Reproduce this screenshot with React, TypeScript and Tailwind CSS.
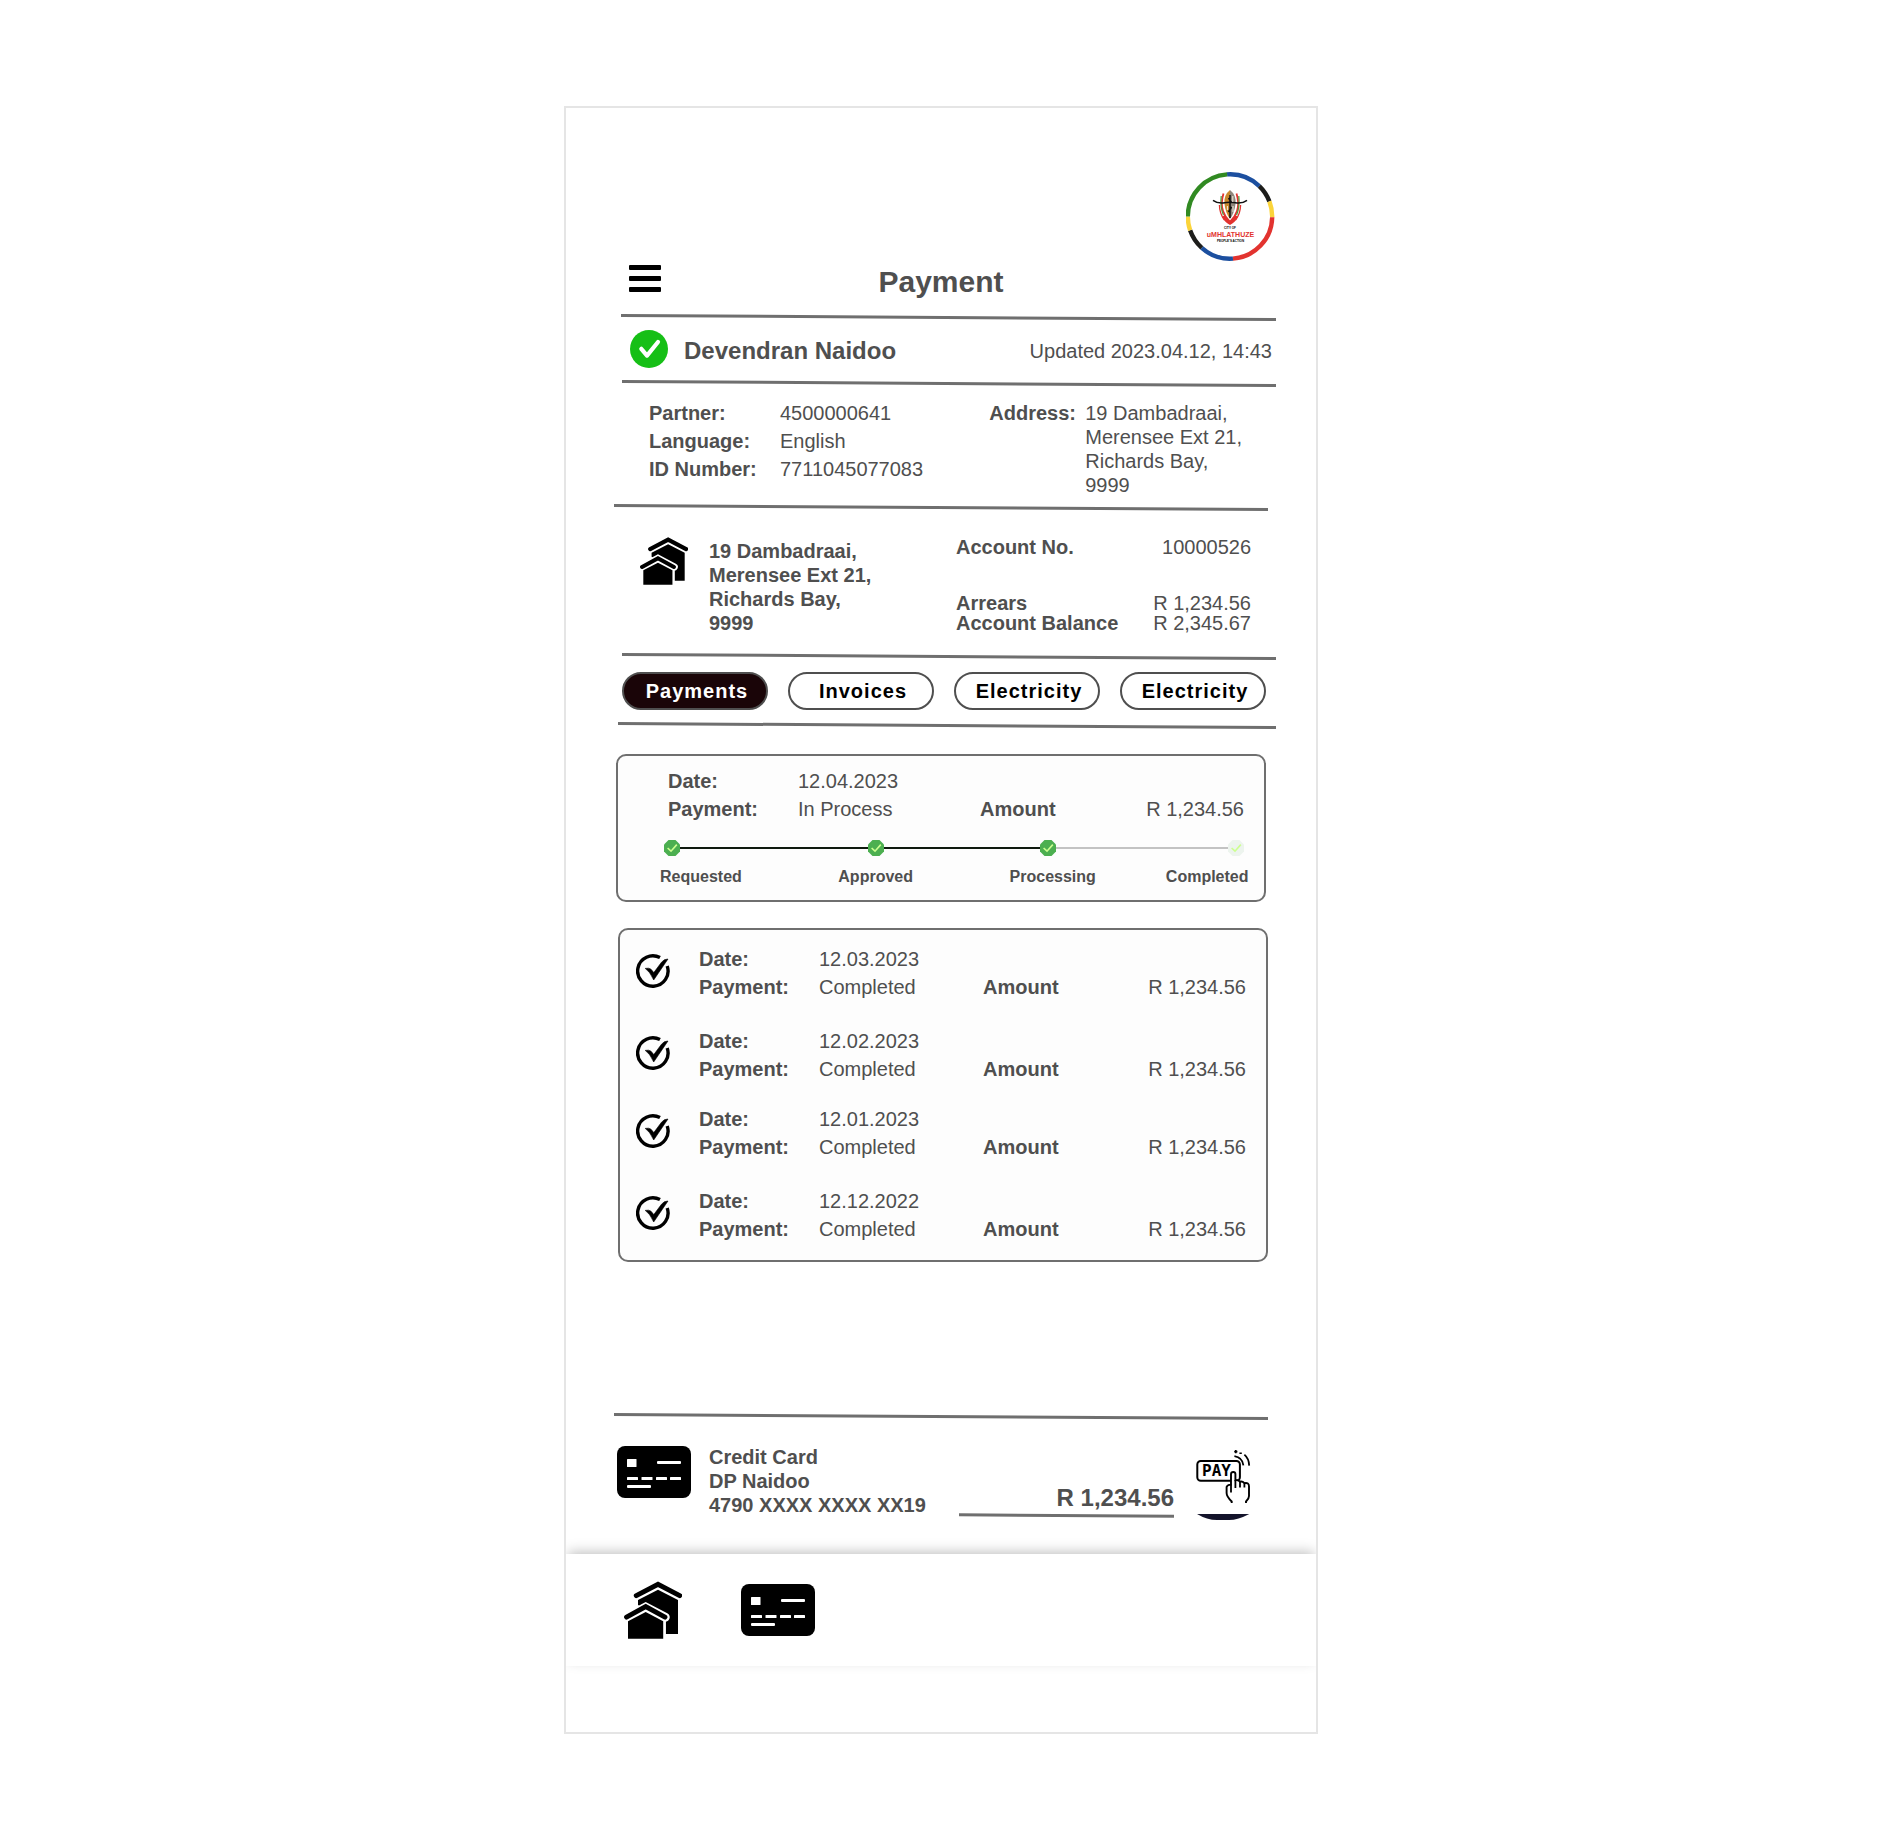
import React from "react";

function Divider({ className = "" }: { className?: string }) {
  return <hr className={`h-[3px] rotate-[0.35deg] border-0 bg-[#6f6f6f] ${className}`} />;
}

function HousesIcon({ className = "" }: { className?: string }) {
  return (
    <svg viewBox="0 0 58 58" className={className} aria-hidden="true">
      <polyline points="12.3,14.6 34,3.2 55.7,14.6" fill="none" stroke="#000" strokeWidth="5" strokeLinecap="round" />
      <polygon points="14,19 34,8.7 54,19 54,53 41.7,53 41.7,40 14,24" />
      <polyline points="2.5,36.2 21.7,26 41.2,36.2" fill="none" stroke="#fff" strokeWidth="9" strokeLinecap="round" />
      <rect x="38" y="40" width="3.8" height="17.7" fill="#fff" />
      <polyline points="2.5,36.2 21.7,25.6 41,36.2" fill="none" stroke="#000" strokeWidth="4.8" strokeLinecap="round" />
      <polygon points="4,40.3 21.7,31 39.2,40.3 39.2,57.7 4,57.7" />
    </svg>
  );
}

function CardIcon({ className = "" }: { className?: string }) {
  return (
    <svg viewBox="0 0 74 52" className={className} aria-hidden="true">
      <rect width="74" height="52" rx="8" />
      <g fill="#fff">
        <rect x="10" y="13" width="9.5" height="8" rx="0.5" />
        <rect x="40" y="15" width="24" height="3" rx="1" />
        <rect x="10" y="31" width="11" height="3" rx="0.5" />
        <rect x="24.5" y="31" width="11" height="3" rx="0.5" />
        <rect x="39" y="31" width="11" height="3" rx="0.5" />
        <rect x="53" y="31" width="11" height="3" rx="0.5" />
        <rect x="10" y="39" width="24" height="3" rx="1" />
      </g>
    </svg>
  );
}

function DoneIcon() {
  return (
    <svg viewBox="0 0 34 34" className="mt-[9px] size-[34px]" aria-hidden="true">
      <path d="M24 3.6A15.2 15.2 0 1 0 31.2 12" fill="none" stroke="#000" strokeWidth="3.4" />
      <path d="M9.2 14.4Q13 13.6 15 15.2L17.8 18.6L25.5 8.2Q28.2 4.8 32 5L17.7 26Q14 17.5 9.2 14.4Z" stroke="#000" strokeWidth="0.6" />
    </svg>
  );
}

function VerifiedIcon() {
  return (
    <svg viewBox="0 0 38 38" className="size-[38px]" aria-hidden="true">
      <circle cx="19" cy="19" r="19" fill="#16bf16" />
      <polyline points="11.3,18.8 17,25.6 28,12" fill="none" stroke="#fff" strokeWidth="4.2" strokeLinecap="round" strokeLinejoin="round" />
    </svg>
  );
}

function StepMarker({ done }: { done: boolean }) {
  return (
    <svg viewBox="0 0 16 16" className="size-4 shrink-0" aria-hidden="true">
      <polygon points="4.5,0 11.5,0 16,4.5 16,11.5 11.5,16 4.5,16 0,11.5 0,4.5" fill={done ? "#4caf50" : "#edf4ee"} />
      <polyline points="3.6,8 7,11.2 12.8,4.6" fill="none" stroke="#ccff90" strokeWidth="1.6" />
    </svg>
  );
}

function PayIcon() {
  return (
    <svg viewBox="0 0 56 70" className="h-[70px] w-14" aria-hidden="true">
      <rect x="1.3" y="11" width="42.6" height="19.8" rx="3.5" fill="#fff" stroke="#000" strokeWidth="2" />
      <text x="6" y="26" fontSize="16" fontWeight="700" fontFamily="DejaVu Sans Mono, monospace">PAY</text>
      <path
        d="M35.7 53V51.5Q30.6 46.5 30.6 43V37Q31 34.8 35 34.6V24Q35.2 22 37.2 22Q39.4 22 39.4 24V30Q41.5 29.6 44 31.6Q46.5 31 48.4 33.2Q53 32.2 53 36.5V46Q53 49 50 51.5V53"
        fill="#fff"
        stroke="#000"
        strokeWidth="1.9"
      />
      <path d="M35 34.6V42.6M39.4 30V38M44 31.6V37.6M48.4 33.2V37.6" fill="none" stroke="#000" strokeWidth="1.8" />
      <path d="M38.4 6.2Q46.5 7.5 47.4 15.4M48.4 4.6Q53 8.6 53.2 15.6" fill="none" stroke="#000" strokeWidth="1.8" />
      <path d="M38.2 1.6H41.4M39.8 0V3.2M43.4 3.2H45.8" fill="none" stroke="#000" strokeWidth="1.6" />
      <path d="M1 64H53.3Q42 70 33 70H21Q11 70 1 64Z" fill="#14142b" />
    </svg>
  );
}

const ring = [
  { from: -94, to: -46, color: "#1c4f9f" },
  { from: -46, to: -21, color: "#1d1d1b" },
  { from: -21, to: 1, color: "#fbd43a" },
  { from: 1, to: 86, color: "#e2332f" },
  { from: 86, to: 132, color: "#1c4f9f" },
  { from: 132, to: 161, color: "#1d1d1b" },
  { from: 161, to: 180, color: "#fbd43a" },
  { from: 180, to: 266, color: "#318a22" },
];

function CityLogo() {
  return (
    <svg viewBox="0 0 90 90" className="size-[90px]" role="img" aria-label="City of uMhlathuze">
      {ring.map((s) => (
        <circle
          key={s.from}
          cx="44"
          cy="44.5"
          r="42.2"
          fill="none"
          stroke={s.color}
          strokeWidth="4.4"
          pathLength={360}
          strokeDasharray={`${s.to - s.from} 360`}
          transform={`rotate(${s.from} 44 44.5)`}
        />
      ))}
      <path d="M38.5 43L44 49L49.5 43L52 45Q49 50.5 44 53Q39 50.5 36 45Z" fill="#e2332f" />
      <path d="M37.5 21.5Q34.5 31 37 39Q39 45 44 50Q49 45 51 39Q53.5 31 50.5 21.5" fill="none" stroke="#e2332f" strokeWidth="1.8" />
      <path d="M33.4 33Q33.6 42 38.5 48M54.6 33Q54.4 42 49.5 48" fill="none" stroke="#e2332f" strokeWidth="1.3" />
      <path d="M35.2 24Q34 35 37.4 43M52.8 24Q54 35 50.6 43" fill="none" stroke="#4f9a3c" strokeWidth="1.2" />
      <path d="M44 18Q37.5 23 38.5 32Q39.5 41 44 47Z" fill="#c9892c" />
      <path d="M44 18Q50.5 23 49.5 32Q48.5 41 44 47Z" fill="#8f867b" />
      <path d="M27 28.4Q31 31.4 37 31Q44 29.4 51 31Q57 31.4 61 28.4" fill="none" stroke="#111" strokeWidth="1.5" />
      <path d="M44 23V46M42.6 26L45.6 31M45.6 35L42.4 40" stroke="#111" strokeWidth="1.5" />
      <path d="M46.8 24V30M47 34V40M41.4 34V38" stroke="#f4efe2" strokeWidth="1" />
      <text x="44" y="57" textAnchor="middle" fontSize="3" fontWeight="700" fontFamily="Liberation Sans, sans-serif">CITY OF</text>
      <text x="44.5" y="65" textAnchor="middle" fontSize="7" fontWeight="700" fill="#e2332f" fontFamily="Liberation Sans, sans-serif">uMHLATHUZE</text>
      <text x="44.5" y="70" textAnchor="middle" fontSize="3" fontWeight="700" fontFamily="Liberation Sans, sans-serif">PEOPLE’S ACTION</text>
    </svg>
  );
}

const tabs = ["Payments", "Invoices", "Electricity", "Electricity"];

const history = [
  ["12.03.2023", "12.02.2023"],
  ["12.01.2023", "12.12.2022"],
];

function HistoryRow({ date }: { date: string }) {
  return (
    <li className="flex items-start pr-5 pl-4">
      <DoneIcon />
      <dl className="ml-[29px] grid flex-1 grid-cols-[120px_164px_1fr_auto] leading-7">
        <dt className="font-bold">Date:</dt>
        <dd className="col-span-3">{date}</dd>
        <dt className="font-bold">Payment:</dt>
        <dd>Completed</dd>
        <dt className="font-bold">Amount</dt>
        <dd>R 1,234.56</dd>
      </dl>
    </li>
  );
}

export default function App() {
  return (
    <div className="flex min-h-screen items-start justify-center bg-white py-[106px] pr-1 font-['Liberation_Sans',Arial,sans-serif] text-[20px] text-[#4f4f4f]">
      <main className="w-full max-w-[754px] overflow-hidden border-2 border-[#e5e5e5] bg-white pt-16 pb-[66px]">
        <header>
          <div className="flex justify-end pr-10">
            <CityLogo />
          </div>
          <div className="mt-0.5 grid grid-cols-[1fr_auto_1fr] items-start">
            <button type="button" aria-label="Open menu" className="mt-px ml-[63px] flex w-8 flex-col gap-[6px]">
              <span className="h-[5px] w-full rounded-[1px] bg-black" />
              <span className="h-[5px] w-full rounded-[1px] bg-black" />
              <span className="h-[5px] w-full rounded-[1px] bg-black" />
            </button>
            <h1 className="text-[30px] leading-9 font-bold">Payment</h1>
          </div>
        </header>

        <Divider className="mt-4 mr-10 ml-[55px]" />
        <section className="flex h-[63px] items-center pr-11 pb-[3px] pl-16">
          <VerifiedIcon />
          <h2 className="ml-4 pt-1 text-[24px] leading-7 font-bold">Devendran Naidoo</h2>
          <p className="ml-auto pt-1 leading-6">Updated 2023.04.12, 14:43</p>
        </section>

        <Divider className="mr-10 ml-14" />
        <section className="flex justify-between pt-[14px] pr-[74px] pb-[9px] pl-[83px]">
          <dl className="grid grid-cols-[131px_auto] content-start leading-7">
            <dt className="font-bold">Partner:</dt>
            <dd>4500000641</dd>
            <dt className="font-bold">Language:</dt>
            <dd>English</dd>
            <dt className="font-bold">ID Number:</dt>
            <dd>7711045077083</dd>
          </dl>
          <dl className="grid grid-cols-[96px_auto] pt-0.5 leading-6">
            <dt className="font-bold">Address:</dt>
            <dd>
              19 Dambadraai,
              <br />
              Merensee Ext 21,
              <br />
              Richards Bay,
              <br />
              9999
            </dd>
          </dl>
        </section>

        <Divider className="mr-12 ml-12" />
        <section className="flex items-start pt-7 pr-[65px] pb-5 pl-[74px]">
          <HousesIcon className="size-12" />
          <address className="ml-[21px] pt-0.5 leading-6 font-bold not-italic">
            19 Dambadraai,
            <br />
            Merensee Ext 21,
            <br />
            Richards Bay,
            <br />
            9999
          </address>
          <dl className="ml-auto grid w-[295px] grid-cols-[auto_auto] justify-between leading-5">
            <dt className="pb-9 font-bold">Account No.</dt>
            <dd className="text-right">10000526</dd>
            <dt className="font-bold">Arrears</dt>
            <dd className="text-right">R 1,234.56</dd>
            <dt className="font-bold">Account Balance</dt>
            <dd className="text-right">R 2,345.67</dd>
          </dl>
        </section>

        <Divider className="mr-10 ml-14" />
        <div role="tablist" className="grid grid-cols-4 gap-5 pt-[14px] pr-[50px] pb-[14px] pl-14">
          {tabs.map((label, i) => (
            <button
              key={i}
              type="button"
              role="tab"
              aria-selected={i === 0}
              className={`h-[38px] rounded-full border-2 border-[#4f4f4f] pl-1 leading-5 font-bold tracking-wider ${
                i === 0 ? "bg-[#1a0508] text-white" : "bg-white text-black"
              }`}
            >
              {label}
            </button>
          ))}
        </div>
        <Divider className="mr-10 ml-[52px]" />

        <section className="mt-[27px] mr-[50px] ml-[50px] rounded-[10px] border-2 border-[#6f6f6f] bg-[#fdfdfd] pt-[11px] pb-[11px]">
          <dl className="grid grid-cols-[130px_182px_1fr_auto] pr-5 pl-[50px] leading-7">
            <dt className="font-bold">Date:</dt>
            <dd className="col-span-3">12.04.2023</dd>
            <dt className="font-bold">Payment:</dt>
            <dd>In Process</dd>
            <dt className="font-bold">Amount</dt>
            <dd>R 1,234.56</dd>
          </dl>
          <div className="mt-[17px] flex items-center pr-5 pl-[46px]">
            <StepMarker done />
            <span className="h-0.5 grow-[188] bg-[#0f1a0f]" />
            <StepMarker done />
            <span className="h-0.5 grow-[156] bg-[#0f1a0f]" />
            <StepMarker done />
            <span className="h-0.5 grow-[172] bg-[#c3c3c3]" />
            <StepMarker done={false} />
          </div>
          <ol className="mt-[9px] grid grid-cols-[178fr_171fr_156fr_84fr] pr-[14px] pl-[42px] text-[16px] leading-6 font-bold">
            <li>Requested</li>
            <li>Approved</li>
            <li>Processing</li>
            <li>Completed</li>
          </ol>
        </section>

        <section className="mt-[26px] mr-12 ml-[52px] flex flex-col gap-[22px] rounded-[10px] border-2 border-[#6f6f6f] bg-[#fdfdfd] pt-[15px] pb-[17px]">
          {history.map((pair) => (
            <ul key={pair[0]} className="flex flex-col gap-[26px]">
              {pair.map((date) => (
                <HistoryRow key={date} date={date} />
              ))}
            </ul>
          ))}
        </section>

        <Divider className="mt-[153px] mr-12 ml-12" />
        <section className="flex items-start pt-[27px] pr-16 pb-[34px] pl-[51px]">
          <CardIcon className="mt-px h-[52px] w-[74px]" />
          <p className="ml-[18px] leading-6 font-bold">
            Credit Card
            <br />
            DP Naidoo
            <br />
            4790 XXXX XXXX XX19
          </p>
          <div className="ml-auto w-[215px] pt-[39px]">
            <input
              type="text"
              aria-label="Amount to pay"
              defaultValue="R 1,234.56"
              className="block h-7 w-full bg-transparent text-right text-[24px] leading-7 font-bold outline-none"
            />
            <Divider className="mt-[2px]" />
          </div>
          <button type="button" aria-label="Pay" className="mt-[5px] ml-[22px]">
            <PayIcon />
          </button>
        </section>

        <nav className="flex h-28 items-center bg-white pl-[58px] shadow-[0_-4px_12px_-2px_rgba(0,0,0,0.25)]">
          <a href="#properties" aria-label="Properties">
            <HousesIcon className="size-[58px]" />
          </a>
          <a href="#cards" aria-label="Cards" className="ml-[59px]">
            <CardIcon className="h-[52px] w-[74px]" />
          </a>
        </nav>
      </main>
    </div>
  );
}
